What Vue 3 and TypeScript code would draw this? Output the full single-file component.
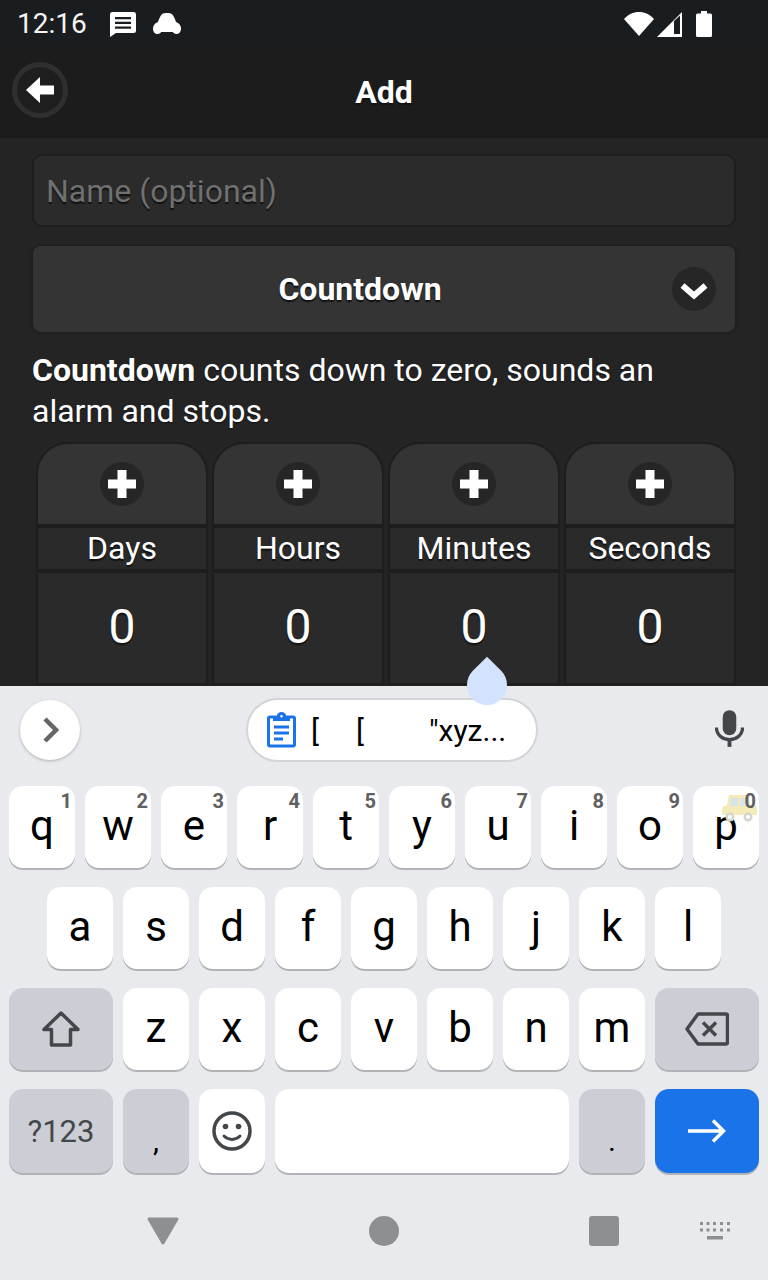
<script setup lang="ts">
const units = ['Days', 'Hours', 'Minutes', 'Seconds']

const rowOne = [
  { label: 'q', hint: '1' },
  { label: 'w', hint: '2' },
  { label: 'e', hint: '3' },
  { label: 'r', hint: '4' },
  { label: 't', hint: '5' },
  { label: 'y', hint: '6' },
  { label: 'u', hint: '7' },
  { label: 'i', hint: '8' },
  { label: 'o', hint: '9' },
  { label: 'p', hint: '0' },
]
const rowTwo = ['a', 's', 'd', 'f', 'g', 'h', 'j', 'k', 'l']
const rowThree = ['z', 'x', 'c', 'v', 'b', 'n', 'm']
</script>

<template>
  <div class="phone">
    <div class="app">
      <div class="status">
        <span class="time">12:16</span>
        <svg class="st-msg" width="26" height="25" viewBox="0 0 26 25">
          <path fill="#fff" fill-rule="evenodd" d="M2.500 0h21A2.500 2.500 0 0 1 26 2.500v16a2.500 2.500 0 0 1-2.500 2.500H6l-6 4V2.500A2.500 2.500 0 0 1 2.500 0zM5 5v2.200h16V5zm0 4.800V12h16V9.800zm0 4.800v2.200h16v-2.200z" />
        </svg>
        <svg class="st-car" width="28" height="22" viewBox="0 0 28 22">
          <path fill="#fff" d="M9.500.8C11-.2 17-.2 18.500.8c1.800 1.200 3.300 4.500 4.500 8.200 3 1 5 3.500 5 6.500 0 3-1.500 5.500-4.500 5.500-1.500 0-3-.8-3.800-2H8.300c-.8 1.200-2.300 2-3.800 2C1.500 21 0 18.500 0 15.500c0-3 2-5.500 5-6.500C6.200 5.300 7.700 2 9.500.8z" />
        </svg>
        <svg class="st-wifi" width="30" height="24" viewBox="0 0 30 24">
          <path fill="#fff" d="M15 24 0 7C4 2.600 9.300 0 15 0s11 2.600 15 7z" />
        </svg>
        <svg class="st-signal" width="25" height="25" viewBox="0 0 25 25">
          <path fill="#fff" d="M25 0v25H0z" />
          <path fill="#1a1d20" d="M17 9v13h6V3.500z" />
        </svg>
        <svg class="st-battery" width="16" height="26" viewBox="0 0 16 26">
          <path fill="#fff" d="M5 0h6v2.500h3.500A1.500 1.500 0 0 1 16 4v20.500a1.500 1.500 0 0 1-1.500 1.500h-13A1.500 1.500 0 0 1 0 24.500V4a1.500 1.500 0 0 1 1.500-1.500H5z" />
        </svg>
      </div>

      <header class="bar">
        <button class="back">
          <svg width="28" height="26" viewBox="0 0 28 26">
            <path fill="#fff" d="M0 13 14 0v8.500h14v9H14V26z" />
          </svg>
        </button>
        <h1 class="title">Add</h1>
      </header>

      <main class="content">
        <div class="name">Name (optional)</div>

        <div class="select">
          <span class="select-text">Countdown</span>
          <span class="round select-icon">
            <svg width="28" height="24" viewBox="0 0 28 24">
              <path fill="none" stroke="#fff" stroke-width="6" d="m2.500 8.500 11.500 10 11.500-10" />
            </svg>
          </span>
        </div>

        <p class="desc"><b>Countdown</b> counts down to zero, sounds an alarm and stops.</p>

        <div class="units">
          <div v-for="unit in units" :key="unit" class="unit">
            <div class="unit-top">
              <span class="round">
                <svg width="28" height="28" viewBox="0 0 28 28">
                  <path fill="#fff" d="M9.500 0h9v9.500H28v9h-9.500V28h-9v-9.500H0v-9h9.500z" />
                </svg>
              </span>
            </div>
            <div class="unit-label">{{ unit }}</div>
            <div class="unit-value">0</div>
          </div>
        </div>
      </main>
    </div>

    <div class="keyboard">
      <div class="drop"></div>

      <div class="strip">
        <span class="expand">
          <svg width="16" height="26" viewBox="0 0 16 26">
            <path fill="none" stroke="#666" stroke-width="4.500" d="m2 2 11 11L2 24" />
          </svg>
        </span>
        <div class="clip">
          <svg class="clip-icon" width="29" height="36" viewBox="0 0 29 36">
            <path fill="none" stroke="#1a73e8" stroke-width="3" stroke-linejoin="round" d="M9 5H3a1.500 1.500 0 0 0-1.500 1.500v26A1.500 1.500 0 0 0 3 34h23a1.500 1.500 0 0 0 1.500-1.500v-26A1.500 1.500 0 0 0 26 5h-6" />
            <path fill="#1a73e8" fill-rule="evenodd" d="M14.500 0C17 0 19 2 19.500 4H23v5H6V4h3.500C10 2 12 0 14.500 0zm0 3a1.300 1.300 0 1 0 0 2.600 1.300 1.300 0 0 0 0-2.600z" />
            <path fill="#1a73e8" d="M7 13.500h15v3H7zM7 19.500h15v3H7zM7 25.500h9v3H7z" />
          </svg>
          <span class="clip-text">[</span>
          <span class="clip-text clip-second">[</span>
          <span class="clip-text clip-last">"xyz...</span>
        </div>
        <svg class="mic" width="29" height="37" viewBox="0 0 30 38">
          <rect x="8" y="0" width="14" height="26" rx="7" fill="#44474a" />
          <path fill="none" stroke="#44474a" stroke-width="3.500" d="M1.500 18c0 7.500 6 12.500 13.500 12.500S28.500 25.500 28.500 18" />
          <path fill="#44474a" d="M13 30h4v8h-4z" />
        </svg>
      </div>

      <div class="rows">
        <div class="row">
          <div v-for="key in rowOne" :key="key.label" class="key">
            <svg v-if="key.label === 'p'" class="taxi" width="35" height="29" viewBox="0 0 35 29">
              <path fill="#f3e6a6" d="M7 2h19l2 10h4c2 0 3 1.500 3 4v6H0v-5c0-2.500 1.500-4.500 5-5z" opacity=".8" />
              <path fill="#cfe3ee" d="M9 5h7v8H8zM18 5h6l1.500 8H18z" opacity=".85" />
              <circle cx="8" cy="24" r="4.500" fill="#d5d5d0" />
              <circle cx="26" cy="24" r="4.500" fill="#d5d5d0" />
              <circle cx="8" cy="24" r="2" fill="#fff" />
              <circle cx="26" cy="24" r="2" fill="#fff" />
            </svg>
            <span class="hint">{{ key.hint }}</span>
            <span class="letter">{{ key.label }}</span>
          </div>
        </div>

        <div class="row row-inset">
          <div v-for="letter in rowTwo" :key="letter" class="key">
            <span class="letter">{{ letter }}</span>
          </div>
        </div>

        <div class="row">
          <div class="key wide fn">
            <svg width="38" height="36" viewBox="0 0 38 36">
              <path fill="none" stroke="#44474a" stroke-width="3.500" stroke-linejoin="round" d="M19 2 2 18.500h7.500V34h19V18.500H36z" />
            </svg>
          </div>
          <div v-for="letter in rowThree" :key="letter" class="key">
            <span class="letter">{{ letter }}</span>
          </div>
          <div class="key wide fn">
            <svg width="44" height="34" viewBox="0 0 44 34">
              <path fill="none" stroke="#44474a" stroke-width="3.500" stroke-linejoin="round" d="M13 2h28a1.500 1.500 0 0 1 1.500 1.500v27A1.500 1.500 0 0 1 41 32H13L2 17z" />
              <path fill="none" stroke="#44474a" stroke-width="3.500" d="m18 10.500 13 13M31 10.500l-13 13" />
            </svg>
          </div>
        </div>

        <div class="row row-bottom">
          <div class="key wide fn sym">?123</div>
          <div class="key fn punct">,</div>
          <div class="key">
            <svg width="40" height="40" viewBox="0 0 40 40">
              <circle cx="20" cy="20" r="18" fill="none" stroke="#44474a" stroke-width="3.500" />
              <circle cx="13.500" cy="15.500" r="2.800" fill="#44474a" />
              <circle cx="26.500" cy="15.500" r="2.800" fill="#44474a" />
              <path fill="none" stroke="#44474a" stroke-width="3" stroke-linecap="round" d="M12 25c4.500 4.500 11.500 4.500 16 0" />
            </svg>
          </div>
          <div class="key space"></div>
          <div class="key fn punct">.</div>
          <div class="key wide enter">
            <svg width="38" height="24" viewBox="0 0 38 24">
              <path fill="none" stroke="#fff" stroke-width="3.500" d="M0 12h35M25 1.500 35.500 12 25 22.500" />
            </svg>
          </div>
        </div>
      </div>

      <nav class="nav">
        <svg class="nav-back" width="32" height="28" viewBox="0 0 32 28">
          <path fill="#8e8f91" stroke="#8e8f91" stroke-width="3" stroke-linejoin="round" d="M2 2h28L16 26z" />
        </svg>
        <span class="nav-home"></span>
        <span class="nav-recent"></span>
        <svg class="nav-kbd" width="30" height="18" viewBox="0 0 30 18">
          <path fill="#8e8f91" d="M0 0h3v3H0zM6.500 0h3v3h-3zM13 0h3v3h-3zM20 0h3v3h-3zM27 0h3v3h-3zM0 6.500h3v3H0zM6.500 6.500h3v3h-3zM13 6.500h3v3h-3zM20 6.500h3v3h-3zM27 6.500h3v3h-3zM7 14h16v3.500H7z" />
        </svg>
      </nav>
    </div>
  </div>
</template>

<style scoped>
.phone {
  width: 768px;
  height: 1280px;
  display: flex;
  flex-direction: column;
  overflow: hidden;
  font-family: Roboto, "Noto Sans", sans-serif;
  background: #e8eaed;
}

.app {
  height: 686px;
  flex: none;
  overflow: hidden;
  background: #242424;
  color: #fff;
}

.status {
  height: 48px;
  background: #1a1d20;
  display: flex;
  align-items: center;
  padding-left: 17px;
}

.time {
  font-size: 28px;
  line-height: 50px;
  width: 93px;
  color: #f4f4f4;
}

.st-car {
  margin-left: 17px;
}

.st-wifi {
  margin-left: 443px;
}

.st-signal {
  margin-left: 3px;
}

.st-battery {
  margin-left: 14px;
  margin-top: -1px;
}

.bar {
  height: 90px;
  background: #1c1c1c;
  display: flex;
  align-items: center;
  justify-content: center;
  position: relative;
}

.back {
  position: absolute;
  left: 12px;
  top: 14px;
  width: 56px;
  height: 56px;
  padding: 0;
  border: 5px solid #2f2f2f;
  border-radius: 50%;
  background: #1e1e1e;
  display: flex;
  align-items: center;
  justify-content: center;
}

.title {
  margin: -2px 0 0;
  font-size: 32px;
  font-weight: 700;
  text-shadow: 0 2px 1px #111;
}

.content {
  padding: 16px 33px 0;
}

.name {
  height: 73px;
  box-sizing: border-box;
  width: 704px;
  margin-left: -1px;
  border: 2px solid #1e1e1e;
  border-radius: 10px;
  background: #2b2b2b;
  padding-left: 12px;
  font-size: 32px;
  line-height: 70px;
  color: #707070;
  text-shadow: 0 2px 1px #111;
}

.select {
  margin-top: 19px;
  height: 86px;
  width: 702px;
  border-radius: 8px;
  background: #343434;
  box-shadow: 0 0 2px 1px #1e1e1e;
  display: flex;
  align-items: center;
  justify-content: center;
  position: relative;
}

.select-text {
  margin-right: 48px;
  margin-top: -1px;
  font-size: 32px;
  font-weight: 700;
  text-shadow: 0 2px 1px #111;
}

.round {
  width: 44px;
  height: 44px;
  border-radius: 50%;
  background: #262626;
  display: flex;
  align-items: center;
  justify-content: center;
}

.select-icon {
  position: absolute;
  right: 19px;
  top: 21px;
}

.desc {
  margin: 18px 0 0 -1px;
  font-size: 32px;
  line-height: 41px;
  color: #fff;
  text-shadow: 0 1px 1px #111;
}

.units {
  margin: 12px 0 0 5px;
  display: flex;
  gap: 8px;
}

.unit {
  width: 168px;
  flex: none;
}

.unit-top,
.unit-label,
.unit-value {
  box-sizing: border-box;
  box-shadow: 0 0 0 2px #1e1e1e;
}

.unit-top {
  height: 80px;
  border-radius: 30px 30px 0 0;
  background: #343434;
  display: flex;
  align-items: center;
  justify-content: center;
}

.unit-label {
  margin-top: 4px;
  height: 41px;
  background: #2a2a2a;
  text-align: center;
  font-size: 32px;
  line-height: 40px;
  text-shadow: 0 2px 1px #111;
}

.unit-value {
  margin-top: 4px;
  height: 110px;
  background: #2a2a2a;
  text-align: center;
  font-size: 48px;
  line-height: 108px;
  text-shadow: 0 2px 1px #111;
}

.keyboard {
  flex: 1;
  position: relative;
  background: #e8eaee;
}

.drop {
  position: absolute;
  left: 467px;
  top: -29px;
  width: 40px;
  height: 40px;
  margin-top: 8px;
  background: #d3e3fd;
  border-radius: 50% 0 50% 50%;
  transform: rotate(-45deg);
  z-index: 2;
}

.strip {
  height: 100px;
  box-sizing: border-box;
  padding: 12px 0 0 20px;
  display: flex;
  align-items: flex-start;
}

.expand {
  width: 60px;
  height: 60px;
  margin-top: 2px;
  flex: none;
  border-radius: 50%;
  background: #fff;
  box-shadow: 0 1px 3px rgba(0, 0, 0, 0.25);
  display: flex;
  align-items: center;
  justify-content: center;
  padding-left: 2px;
  box-sizing: border-box;
}

.clip {
  margin-left: 166px;
  width: 292px;
  height: 64px;
  box-sizing: border-box;
  border: 2px solid #d2d4d7;
  border-radius: 32px;
  background: #fff;
  display: flex;
  align-items: center;
  padding-left: 19px;
}

.clip-icon {
  flex: none;
}

.clip-text {
  margin-left: 15px;
  font-size: 30px;
  color: #000;
}

.clip-second {
  margin-left: 37px;
}

.clip-last {
  margin-left: 65px;
}

.mic {
  margin-left: 177px;
  margin-top: 12px;
}

.rows {
  padding: 0 9px;
  display: flex;
  flex-direction: column;
  gap: 19px;
}

.row {
  display: flex;
  gap: 10px;
}

.row-inset {
  padding-left: 38px;
}

.key {
  position: relative;
  width: 66px;
  height: 82px;
  flex: none;
  box-sizing: border-box;
  border-radius: 14px;
  background: #fff;
  box-shadow: 0 2px 0 #b1b3b6;
  display: flex;
  align-items: center;
  justify-content: center;
  color: #000;
}

.letter {
  font-size: 42px;
  line-height: 1;
  margin-top: -3px;
}

.hint {
  position: absolute;
  right: 3px;
  top: 3px;
  font-size: 20px;
  font-weight: 700;
  line-height: 24px;
  color: #606060;
  z-index: 1;
}

.taxi {
  position: absolute;
  left: 29px;
  top: 7px;
}

.wide {
  width: 104px;
}

.fn {
  background: #cbced5;
}

.row-bottom .key {
  height: 84px;
}

.sym {
  font-size: 31px;
  color: #44474a;
}

.punct {
  font-size: 30px;
  padding-top: 18px;
}

.space {
  width: 294px;
}

.enter {
  background: #1a73e8;
}

.nav {
  position: absolute;
  left: 147px;
  top: 530px;
  display: flex;
  align-items: center;
}

.nav-home {
  margin-left: 190px;
  width: 30px;
  height: 30px;
  border-radius: 50%;
  background: #8e8f91;
}

.nav-recent {
  margin-left: 190px;
  width: 30px;
  height: 30px;
  border-radius: 3px;
  background: #8e8f91;
}

.nav-kbd {
  margin-left: 81px;
  margin-top: 0;
}
</style>
